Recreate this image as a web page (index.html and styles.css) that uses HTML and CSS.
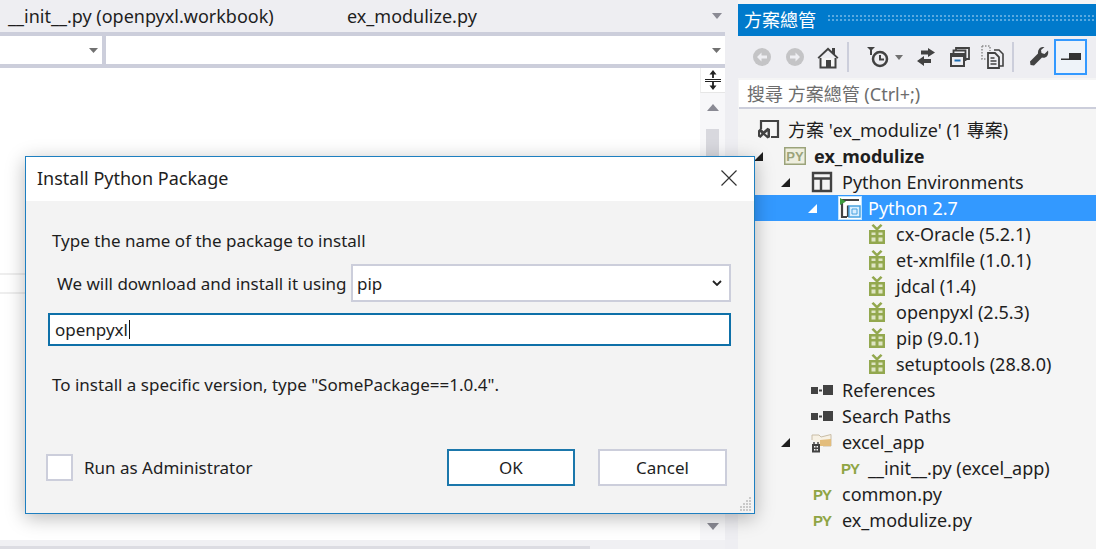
FILE: index.html
```html
<!DOCTYPE html>
<html lang="en">
<head>
<meta charset="utf-8">
<title>Install Python Package</title>
<link rel="stylesheet" href="styles.css">
</head>
<body>
<div class="app">
  <main class="editor">
    <div class="tabs">
      <span class="tab tab-first">__init__.py (openpyxl.workbook)</span>
      <span class="tab">ex_modulize.py</span>
      <svg class="tab-menu" width="10" height="6" viewBox="0 0 10 6"><path d="M0 0h10L5 6z" fill="#8a8a94"/></svg>
    </div>
    <div class="combos">
      <div class="combo combo-left"><svg width="9" height="5" viewBox="0 0 9 5"><path d="M0 0h9L4.500 5z" fill="#717171"/></svg></div>
      <div class="combo combo-right"><svg width="9" height="5" viewBox="0 0 9 5"><path d="M0 0h9L4.500 5z" fill="#717171"/></svg></div>
    </div>
    <div class="code">
      <div class="code-area">
        <div class="code-line"></div>
      </div>
      <div class="vscroll">
        <div class="split-btn">
          <svg width="16" height="20" viewBox="0 0 16 20"><path d="M8 0L4.500 4.500h2.600V8h1.800V4.500h2.600zM8 20l-3.500-4.500h2.600V12h1.800v3.500h2.600zM0 9h16v1H0zM0 11h16v1H0z" fill="#222"/></svg>
        </div>
        <svg class="scroll-up" width="12" height="7" viewBox="0 0 12 7"><path d="M6 0l6 7H0z" fill="#8a8a94"/></svg>
        <div class="thumb"></div>
        <svg class="scroll-down" width="12" height="7" viewBox="0 0 12 7"><path d="M0 0h12L6 7z" fill="#8a8a94"/></svg>
      </div>
    </div>
    <div class="hscroll"><div class="hthumb"></div></div>
  </main>

  <aside class="panel">
    <header class="panel-title"><span>方案總管</span><div class="dots"></div></header>
    <div class="toolbar">
      <button class="tool"><svg width="20" height="20" viewBox="0 0 20 20"><circle cx="10" cy="10" r="9" fill="#c4c4c6"/><path d="M5 10l4.500-4.500v3h5.500v3H9.500v3z" fill="#eeeef2"/></svg></button>
      <button class="tool"><svg width="20" height="20" viewBox="0 0 20 20"><circle cx="10" cy="10" r="9" fill="#c4c4c6"/><path d="M15 10l-4.500-4.500v3H5v3h5.500v3z" fill="#eeeef2"/></svg></button>
      <button class="tool"><svg width="24" height="24" viewBox="0 0 24 24"><path d="M1.500 12.500L12 2.500l4 3.800V3h3v6.200l3.500 3.300-1.300 1.300L12 5.200 2.800 13.800z" fill="#424242"/><path d="M4.500 13v9.500h15V13" fill="#f6f6f6" stroke="#424242" stroke-width="2"/><rect x="10" y="15" width="5" height="7" fill="#424242"/></svg></button>
      <i class="sep"></i>
      <button class="tool tool-history"><svg width="22" height="22" viewBox="0 0 22 22"><path d="M0 1h8L4 5z" fill="#424242"/><path d="M4 3v6" stroke="#424242" stroke-width="2"/><circle cx="13" cy="13" r="7" fill="#eeeef2" stroke="#424242" stroke-width="2.500"/><path d="M13 9v4.500h4" fill="none" stroke="#424242" stroke-width="2"/></svg></button>
      <svg class="tool-drop" width="8" height="5" viewBox="0 0 8 5"><path d="M0 0h8L4 5z" fill="#717171"/></svg>
      <button class="tool tool-sync"><svg width="20" height="18" viewBox="0 0 20 18"><path d="M12 0l7 4.500L12 9V6.500H5v-4h7zM8 8L1 13l7 5v-3h7v-4H8z" fill="#424242"/></svg></button>
      <button class="tool"><svg width="20" height="20" viewBox="0 0 20 20"><path d="M6 4V1h13v11h-3M3.500 6V3.500h12V14" fill="none" stroke="#424242" stroke-width="1.800"/><rect x="1" y="7" width="13" height="12" fill="#eeeef2" stroke="#424242" stroke-width="2"/><rect x="1" y="6" width="13" height="4" fill="#424242"/><rect x="4.500" y="12.500" width="6" height="2" fill="#1c6fb5"/></svg></button>
      <button class="tool"><svg width="24" height="24" viewBox="0 0 24 24"><path d="M1 1h8v5" fill="none" stroke="#8d8d8d" stroke-width="1.500" stroke-dasharray="1.500 1.500"/><path d="M1 1v13h5" fill="none" stroke="#8d8d8d" stroke-width="1.500" stroke-dasharray="1.500 1.500"/><path d="M13 5h5l4 4v12h-4" fill="none" stroke="#424242" stroke-width="1.600"/><path d="M7 8h7l4 4v11H7z" fill="#eeeef2" stroke="#424242" stroke-width="1.800"/><path d="M9.500 13h4M9.500 16h6M9.500 19h6" stroke="#424242" stroke-width="1.400"/></svg></button>
      <i class="sep sep-2"></i>
      <button class="tool tool-wrench"><svg width="20" height="20" viewBox="0 0 20 20"><path d="M19 3.500l-3.500 3.500-3-1L12 3l3.500-3C11.500-.5 8.500 2 9 6.500L1 14.500 1.500 18l3.500.500L13 10.500c4.500 1 7-2.500 6-7z" fill="#424242"/></svg></button>
      <button class="tool tool-pin"><svg width="20" height="8" viewBox="0 0 20 8"><rect x="8" y="0" width="12" height="6" fill="#333"/><rect x="0" y="5.500" width="20" height="1.500" fill="#333"/></svg></button>
    </div>
    <div class="search">搜尋 方案總管 (Ctrl+;)</div>
    <ul class="tree">
      <li class="row d0">
        <span class="slot"><svg width="24" height="22" viewBox="0 0 24 22"><path d="M5 10V2h17v16h-7" fill="none" stroke="#424242" stroke-width="2.200"/><path d="M2 11.500v6l2.500 1.500 3-3 4 3.500 2.500-1.200V10l-2.500-1.200-4 3.500-3-3zM4 13l1.500 1.500L4 16zM11.500 12.500v4L9 14.500z" fill="#424242"/></svg></span>
        <span class="row-cjk">方案 'ex_modulize' (1 專案)</span>
      </li>
      <li class="row d1">
        <span class="twist"><svg width="9" height="9" viewBox="0 0 9 9"><path d="M9 0v9H0z" fill="#1e1e1e"/></svg></span>
        <span class="slot"><svg width="22" height="18" viewBox="0 0 22 18"><rect x=".75" y=".75" width="20.500" height="16.500" fill="#eeeede" stroke="#9ba37a" stroke-width="1.500"/><text x="11" y="13.500" class="py-mark py-mark-small">PY</text></svg></span>
        <strong>ex_modulize</strong>
      </li>
      <li class="row d2">
        <span class="twist"><svg width="9" height="9" viewBox="0 0 9 9"><path d="M9 0v9H0z" fill="#1e1e1e"/></svg></span>
        <span class="slot"><svg width="22" height="22" viewBox="0 0 22 22"><path d="M2 2h18v18H2zM2 7.500h18M10 7.500V20" fill="none" stroke="#424242" stroke-width="2.400"/></svg></span>
        <span>Python Environments</span>
      </li>
      <li class="row d3 selected">
        <span class="twist"><svg width="9" height="9" viewBox="0 0 9 9"><path d="M9 0v9H0z" fill="#fff"/></svg></span>
        <span class="slot"><svg width="24" height="24" viewBox="0 0 24 24"><rect x=".5" y=".5" width="23" height="23" fill="#fff" stroke="#bfe3ff"/><path d="M3 4h18M4 4v17h5M10 9.500V21" fill="none" stroke="#424242" stroke-width="2.200"/><path d="M2 2l6 3.500L2 9z" fill="#3d9a3d"/><rect x="11" y="10" width="11" height="11" fill="#d8eeff" stroke="#4aa3e0" stroke-width="1.500"/><path d="M14 13h5v5h-5z" fill="none" stroke="#4aa3e0"/></svg></span>
        <span>Python 2.7</span>
      </li>
      <li class="row d4"><span class="twist"></span><span class="slot"><svg width="18" height="20" viewBox="0 0 18 20"><use href="#gift"/></svg></span><span>cx-Oracle (5.2.1)</span></li>
      <li class="row d4"><span class="twist"></span><span class="slot"><svg width="18" height="20" viewBox="0 0 18 20"><use href="#gift"/></svg></span><span>et-xmlfile (1.0.1)</span></li>
      <li class="row d4"><span class="twist"></span><span class="slot"><svg width="18" height="20" viewBox="0 0 18 20"><use href="#gift"/></svg></span><span>jdcal (1.4)</span></li>
      <li class="row d4"><span class="twist"></span><span class="slot"><svg width="18" height="20" viewBox="0 0 18 20"><use href="#gift"/></svg></span><span>openpyxl (2.5.3)</span></li>
      <li class="row d4"><span class="twist"></span><span class="slot"><svg width="18" height="20" viewBox="0 0 18 20"><use href="#gift"/></svg></span><span>pip (9.0.1)</span></li>
      <li class="row d4"><span class="twist"></span><span class="slot"><svg width="18" height="20" viewBox="0 0 18 20"><use href="#gift"/></svg></span><span>setuptools (28.8.0)</span></li>
      <li class="row d2"><span class="twist"></span><span class="slot"><svg width="22" height="12" viewBox="0 0 22 12"><use href="#ref"/></svg></span><span>References</span></li>
      <li class="row d2"><span class="twist"></span><span class="slot"><svg width="22" height="12" viewBox="0 0 22 12"><use href="#ref"/></svg></span><span>Search Paths</span></li>
      <li class="row d2">
        <span class="twist"><svg width="9" height="9" viewBox="0 0 9 9"><path d="M9 0v9H0z" fill="#1e1e1e"/></svg></span>
        <span class="slot"><svg width="22" height="22" viewBox="0 0 22 22"><path d="M1 9V4h7l2 2 10-2.500V15h-8" fill="#f7f1e4" stroke="#c9bda6"/><path d="M9 9l11-1v7H9z" fill="#e3bd7c"/><path d="M1 13h8v8.500H1z" fill="#424242"/><path d="M3 11v2M7 11v2" stroke="#424242" stroke-width="1.400"/><path d="M3 15h1.500v1.500H3zM5.500 15H7v1.500H5.500zM3 18h1.500v1.500H3zM5.500 18H7v1.500H5.500z" fill="#f5f5f5"/></svg></span>
        <span>excel_app</span>
      </li>
      <li class="row d3"><span class="twist"></span><span class="slot"><svg width="22" height="14" viewBox="0 0 22 14"><text x="11" y="12.500" class="py-mark">PY</text></svg></span><span>__init__.py (excel_app)</span></li>
      <li class="row d2"><span class="twist"></span><span class="slot"><svg width="22" height="14" viewBox="0 0 22 14"><text x="11" y="12.500" class="py-mark">PY</text></svg></span><span>common.py</span></li>
      <li class="row d2"><span class="twist"></span><span class="slot"><svg width="22" height="14" viewBox="0 0 22 14"><text x="11" y="12.500" class="py-mark">PY</text></svg></span><span>ex_modulize.py</span></li>
    </ul>
  </aside>
</div>

<section class="dialog">
  <header class="dialog-head">
    <h1>Install Python Package</h1>
    <svg class="close" width="16" height="16" viewBox="0 0 16 16"><path d="M.5.5l15 15M15.500.5l-15 15" stroke="#333" stroke-width="1.200" fill="none"/></svg>
  </header>
  <div class="dialog-body">
    <p class="prompt">Type the name of the package to install</p>
    <div class="manager">
      <span class="manager-label">We will download and install it using</span>
      <div class="select"><span>pip</span><svg width="10" height="6" viewBox="0 0 10 6"><path d="M1 1l4 4 4-4" fill="none" stroke="#222" stroke-width="1.800"/></svg></div>
    </div>
    <div class="input"><span>openpyxl</span><i class="caret"></i></div>
    <p class="hint">To install a specific version, type "SomePackage==1.0.4".</p>
    <div class="actions">
      <label class="check"><i class="box"></i><span>Run as Administrator</span></label>
      <button class="btn btn-ok">OK</button>
      <button class="btn btn-cancel">Cancel</button>
    </div>
  </div>
  <svg class="grip" width="14" height="16" viewBox="0 0 14 16"><g fill="#c9c9c9"><rect x="11" y="1" width="2" height="2"/><rect x="8" y="4" width="2" height="2"/><rect x="11" y="4" width="2" height="2"/><rect x="5" y="7" width="2" height="2"/><rect x="8" y="7" width="2" height="2"/><rect x="11" y="7" width="2" height="2"/><rect x="2" y="10" width="2" height="2"/><rect x="5" y="10" width="2" height="2"/><rect x="8" y="10" width="2" height="2"/><rect x="11" y="10" width="2" height="2"/><rect x="2" y="13" width="2" height="2"/><rect x="5" y="13" width="2" height="2"/><rect x="8" y="13" width="2" height="2"/><rect x="11" y="13" width="2" height="2"/></g></svg>
</section>

<svg class="defs" width="0" height="0">
  <defs>
    <g id="gift">
      <path d="M1 6h16v14H1z" fill="#93a84f"/>
      <path d="M3.500 8.500v2.500h4V8.500zM10.500 8.500V11h4V8.500zM3.500 13.500V17.500h4v-4zM10.500 13.500v4h4v-4z" fill="#dfe5c4"/>
      <path d="M8 6L3.500 1.500 5.500 0 9 3.500 12.500 0l2 1.500L10 6z" fill="#93a84f"/>
    </g>
    <g id="ref" fill="#424242">
      <rect x="0" y="3" width="7" height="7"/>
      <rect x="8" y="5.500" width="3" height="2"/>
      <rect x="12" y="1" width="10" height="10"/>
    </g>
  </defs>
</svg>
</body>
</html>
```
FILE: styles.css
```css
* { box-sizing: border-box; }
html, body { margin: 0; padding: 0; width: 1096px; height: 549px; overflow: hidden; }
body {
  position: relative;
  font-family: "Noto Sans", "Noto Sans CJK TC", sans-serif;
  font-size: 17px;
  color: #1e1e1e;
  background: #eeeef2;
}
button { font: inherit; color: inherit; padding: 0; background: none; border: 0; }
ul { list-style: none; margin: 0; padding: 0; }
h1, p { margin: 0; font: inherit; }
.defs { position: absolute; }

.app { display: flex; width: 1096px; height: 549px; }

/* editor */
.editor { width: 738px; display: flex; flex-direction: column; padding-right: 13px; flex: none; }
.tabs { height: 32px; display: flex; align-items: center; padding-left: 8px; font-size: 18px; }
.tab-first { width: 339px; }
.tab-menu { margin-left: auto; margin-right: 3px; }
.combos { height: 36px; display: flex; background: #fff; border-top: 4px solid #cccedb; border-bottom: 4px solid #cccedb; }
.combo { height: 28px; background: #fff; display: flex; align-items: center; justify-content: flex-end; }
.combo-left { width: 102px; padding-right: 4px; }
.combo-right { flex: 1; padding-right: 4px; border-left: 4px solid #cccedb; }
.code { flex: 1; display: flex; min-height: 0; background: #fff; }
.code-area { flex: 1; padding-top: 205px; }
.code-line { height: 21px; border-top: 2px solid #eeeeee; border-bottom: 2px solid #eeeeee; }
.vscroll { width: 25px; background: #f7f7f9; display: flex; flex-direction: column; align-items: center; }
.split-btn { width: 25px; height: 25px; display: flex; align-items: center; justify-content: center; background: #fff; border-bottom: 1px solid #e6e6e6; border-left: 1px solid #eee; }
.scroll-up { margin-top: 11px; }
.thumb { width: 13px; height: 250px; margin-top: 18px; background: #d8d8de; }
.scroll-down { margin-top: auto; margin-bottom: 10px; }
.hscroll { height: 9px; background: #f0f0f3; display: flex; align-items: flex-end; }
.hthumb { width: 590px; height: 3px; background: #dcdce2; }

/* solution explorer */
.panel { flex: 1; display: flex; flex-direction: column; min-width: 0; background: #f5f5f5; padding-top: 4px; box-shadow: 0 -4px 0 #eeeef2; font-size: 18px; }
.panel-title { height: 32px; background: #007acc; color: #fff; display: flex; align-items: center; padding: 0 0 2px 6px; gap: 12px; flex: none; }
.dots { flex: 1; height: 8px; background-image: radial-gradient(circle at 1px 1px, #59a9e0 1px, transparent 1.1px); background-size: 4px 4px; }
.toolbar { height: 42px; background: #eeeef2; display: flex; align-items: center; padding-left: 7px; flex: none; }
.tool { width: 33px; height: 36px; display: flex; align-items: center; justify-content: center; flex: none; }
.sep { width: 2px; height: 30px; background: #cccedb; margin: 0 12px 0 3px; flex: none; }
.tool-drop { margin: 0 5px 0 1px; flex: none; }
.tool-sync { margin: 0 1px; }
.sep-2 { margin: 0 9px 0 3px; }
.tool-wrench { width: 31px; }
.tool-pin { border: 2px solid #3399ff; background: #eef3f9; }
.search { height: 29px; margin: 2px 0 0 1px; background: #fff; border-bottom: 2px solid #cccedb; color: #6d6d6d; padding: 0 0 2px 8px; display: flex; align-items: center; flex: none; }
.tree { flex: 1; padding-top: 8px; background: #f5f5f5; }
.row { height: 26px; display: flex; align-items: center; white-space: nowrap; }
.row strong { font-weight: 700; }
.row-cjk { padding-bottom: 2px; }
.twist { width: 28px; flex: none; display: flex; align-items: center; }
.slot { flex: none; display: flex; align-items: center; justify-content: center; width: 36px; padding-right: 4px; }
.d0 { padding-left: 16px; }
.d0 .slot { width: 34px; padding-right: 6px; }
.d1 { padding-left: 14px; }
.d1 .twist { padding-left: 2px; }
.d1 .slot { width: 34px; }
.d2 { padding-left: 40px; }
.d2 .twist { padding-left: 3px; }
.d3 { padding-left: 66px; }
.d3 .twist { padding-left: 4px; }
.d3 .slot { padding-right: 0; }
.d4 { padding-left: 92px; }
.d4 .slot { width: 38px; padding-right: 1px; }
.selected { background: #3399ff; color: #fff; }
.py-mark { font-family: "Liberation Sans", sans-serif; font-weight: 700; font-size: 15px; letter-spacing: -1px; fill: #8fa544; text-anchor: middle; }
.py-mark-small { font-size: 13px; letter-spacing: 0; fill: #9ba37a; }

/* dialog */
.dialog { position: absolute; left: 25px; top: 156px; width: 730px; height: 358px; border: 1px solid #1e7fc0; background: #f3f3f3; box-shadow: 0 4px 18px rgba(0,0,0,.28); display: flex; flex-direction: column; }
.dialog-head { height: 44px; background: #fff; display: flex; align-items: center; justify-content: space-between; padding: 0 17px 2px 11px; flex: none; }
.dialog-head h1 { font-size: 18px; }
.dialog-body { flex: 1; display: flex; flex-direction: column; padding: 0 23px 0 22px; }
.prompt { margin: 28px 0 0 4px; height: 24px; line-height: 24px; }
.manager { display: flex; align-items: center; margin-top: 11px; height: 38px; }
.manager-label { margin-left: 9px; width: 294px; white-space: nowrap; }
.select { flex: 1; height: 38px; background: #fff; border: 2px solid #cccedb; display: flex; align-items: center; justify-content: space-between; padding: 0 7px 0 4px; }
.input { margin-top: 11px; height: 33px; background: #fff; border: 2px solid #0e70a8; display: flex; align-items: center; padding-left: 5px; }
.caret { width: 1px; height: 19px; background: #111; margin-left: 1px; }
.hint { margin: 27px 0 0 4px; height: 24px; line-height: 24px; }
.actions { display: flex; align-items: center; margin-top: 52px; height: 37px; }
.check { display: flex; align-items: center; gap: 11px; margin-left: -2px; width: 401px; }
.box { width: 27px; height: 27px; background: #fff; border: 2px solid #cccedb; display: block; }
.btn { height: 37px; background: #fff; }
.btn-ok { width: 128px; border: 2px solid #1b77ab; }
.btn-cancel { width: 129px; margin-left: 23px; border: 2px solid #cccedb; }
.grip { position: absolute; right: 2px; bottom: 1px; }
```
